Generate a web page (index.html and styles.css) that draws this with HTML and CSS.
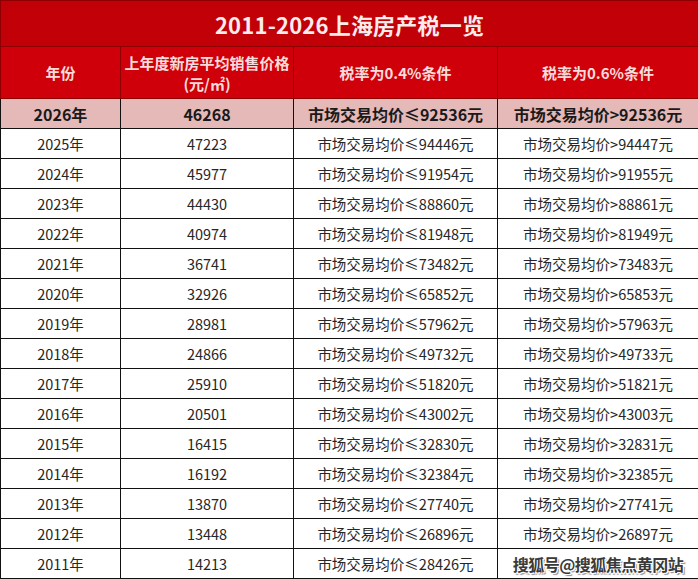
FILE: index.html
```html
<!DOCTYPE html>
<html lang="zh-CN">
<head>
<meta charset="utf-8">
<title>2011-2026上海房产税一览</title>
<link rel="stylesheet" href="styles.css">
</head>
<body>
<table class="tax">
  <colgroup>
    <col class="c1"><col class="c2"><col class="c3"><col class="c4">
  </colgroup>
  <thead>
    <tr class="title"><th colspan="4">2011-2026上海房产税一览</th></tr>
    <tr class="head">
      <th>年份</th>
      <th>上年度新房平均销售价格<br>(元/㎡)</th>
      <th>税率为0.4%条件</th>
      <th>税率为0.6%条件</th>
    </tr>
  </thead>
  <tbody>
    <tr class="hl"><td>2026年</td><td>46268</td><td>市场交易均价≤92536元</td><td>市场交易均价&gt;92536元</td></tr>
    <tr><td>2025年</td><td>47223</td><td>市场交易均价≤94446元</td><td>市场交易均价&gt;94447元</td></tr>
    <tr><td>2024年</td><td>45977</td><td>市场交易均价≤91954元</td><td>市场交易均价&gt;91955元</td></tr>
    <tr><td>2023年</td><td>44430</td><td>市场交易均价≤88860元</td><td>市场交易均价&gt;88861元</td></tr>
    <tr><td>2022年</td><td>40974</td><td>市场交易均价≤81948元</td><td>市场交易均价&gt;81949元</td></tr>
    <tr><td>2021年</td><td>36741</td><td>市场交易均价≤73482元</td><td>市场交易均价&gt;73483元</td></tr>
    <tr><td>2020年</td><td>32926</td><td>市场交易均价≤65852元</td><td>市场交易均价&gt;65853元</td></tr>
    <tr><td>2019年</td><td>28981</td><td>市场交易均价≤57962元</td><td>市场交易均价&gt;57963元</td></tr>
    <tr><td>2018年</td><td>24866</td><td>市场交易均价≤49732元</td><td>市场交易均价&gt;49733元</td></tr>
    <tr><td>2017年</td><td>25910</td><td>市场交易均价≤51820元</td><td>市场交易均价&gt;51821元</td></tr>
    <tr><td>2016年</td><td>20501</td><td>市场交易均价≤43002元</td><td>市场交易均价&gt;43003元</td></tr>
    <tr><td>2015年</td><td>16415</td><td>市场交易均价≤32830元</td><td>市场交易均价&gt;32831元</td></tr>
    <tr><td>2014年</td><td>16192</td><td>市场交易均价≤32384元</td><td>市场交易均价&gt;32385元</td></tr>
    <tr><td>2013年</td><td>13870</td><td>市场交易均价≤27740元</td><td>市场交易均价&gt;27741元</td></tr>
    <tr><td>2012年</td><td>13448</td><td>市场交易均价≤26896元</td><td>市场交易均价&gt;26897元</td></tr>
    <tr><td>2011年</td><td>14213</td><td>市场交易均价≤28426元</td><td><span class="wm">搜狐号@搜狐焦点黄冈站</span></td></tr>
  </tbody>
</table>
</body>
</html>
```

FILE: styles.css
```css
html, body {
  margin: 0;
  padding: 0;
  background: #ffffff;
}

body {
  font-family: "Noto Sans CJK SC", "Noto Sans", sans-serif;
  color: #1f1f1f;
}

.tax {
  width: 698px;
  border-collapse: collapse;
  table-layout: fixed;
}

.c1 { width: 120px; }
.c2 { width: 173px; }
.c3 { width: 204px; }
.c4 { width: 201px; }

.tax th, .tax td {
  padding: 0;
  text-align: center;
  vertical-align: middle;
}

.title th {
  height: 45px;
  background: #c10008;
  color: #fbecec;
  font-size: 22px;
  font-weight: 700;
  border: 1px solid #8e0000;
  letter-spacing: 0.2px;
}

.head th {
  height: 51px;
  background: #cf0009;
  color: #f8dcdc;
  font-size: 15px;
  font-weight: 700;
  line-height: 21px;
  border: 1px solid #8e0000;
}

.tax td {
  height: 29px;
  font-size: 14.5px;
  border: 1px solid #111;
  white-space: nowrap;
  color: #262626;
}

.hl td {
  background: #e5b9b8;
  font-size: 16px;
  font-weight: 700;
  color: #1a1a1a;
}

.wm {
  font-size: 16px;
  font-weight: 700;
  color: #3a3a3a;
  letter-spacing: -0.5px;
  text-shadow: 1px 1px 0 #ffffff, -1px -1px 0 #ffffff, 1px -1px 0 #ffffff, -1px 1px 0 #ffffff, 2px 2px 1px #888;
}
```
